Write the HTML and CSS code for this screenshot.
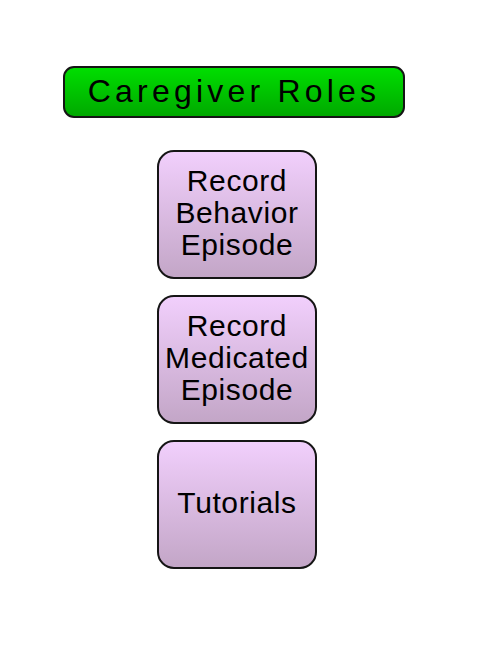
FILE: index.html
```html
<!DOCTYPE html>
<html lang="en">
<head>
    <meta charset="UTF-8">
    <title>Caregiver Roles</title>
    <link rel="stylesheet" href="styles.css">
</head>
<body>
    <div id="screen">
        <div class="title-bar">Caregiver Roles</div>
        <ul id="menu">
            <li class="role-btn">Record<br>Behavior<br>Episode</li>
            <li class="role-btn">Record<br>Medicated<br>Episode</li>
            <li class="role-btn">Tutorials</li>
        </ul>
    </div>
</body>
</html>
```

FILE: styles.css
```css
*{
    margin: 0;
    padding: 0;
    list-style: none;
    box-sizing: border-box;
}
body{
    background: #fff;
    font-family: "Liberation Sans", Arial, sans-serif;
    color: #000;
}
#screen{
    width: 500px;
    height: 647px;
    padding-top: 66px;
    display: flex;
    flex-direction: column;
}
.title-bar{
    margin-left: 63px;
    width: 342px;
    height: 52px;
    border: 2px solid #151515;
    border-radius: 11px;
    background: linear-gradient(#00de00, #00a900);
    font-size: 32px;
    letter-spacing: 4.2px;
    display: flex;
    align-items: center;
    justify-content: center;
    padding-bottom: 1px;
}
#menu{
    margin-top: 32px;
    margin-left: 157px;
    display: flex;
    flex-direction: column;
    gap: 16px;
}
.role-btn{
    width: 160px;
    height: 129px;
    border: 2px solid #151515;
    border-radius: 17px;
    background: linear-gradient(#f1cffc, #c3a6c7);
    font-size: 30px;
    line-height: 32px;
    letter-spacing: 0.6px;
    text-align: center;
    display: flex;
    align-items: center;
    justify-content: center;
    padding-bottom: 3px;
}
```
